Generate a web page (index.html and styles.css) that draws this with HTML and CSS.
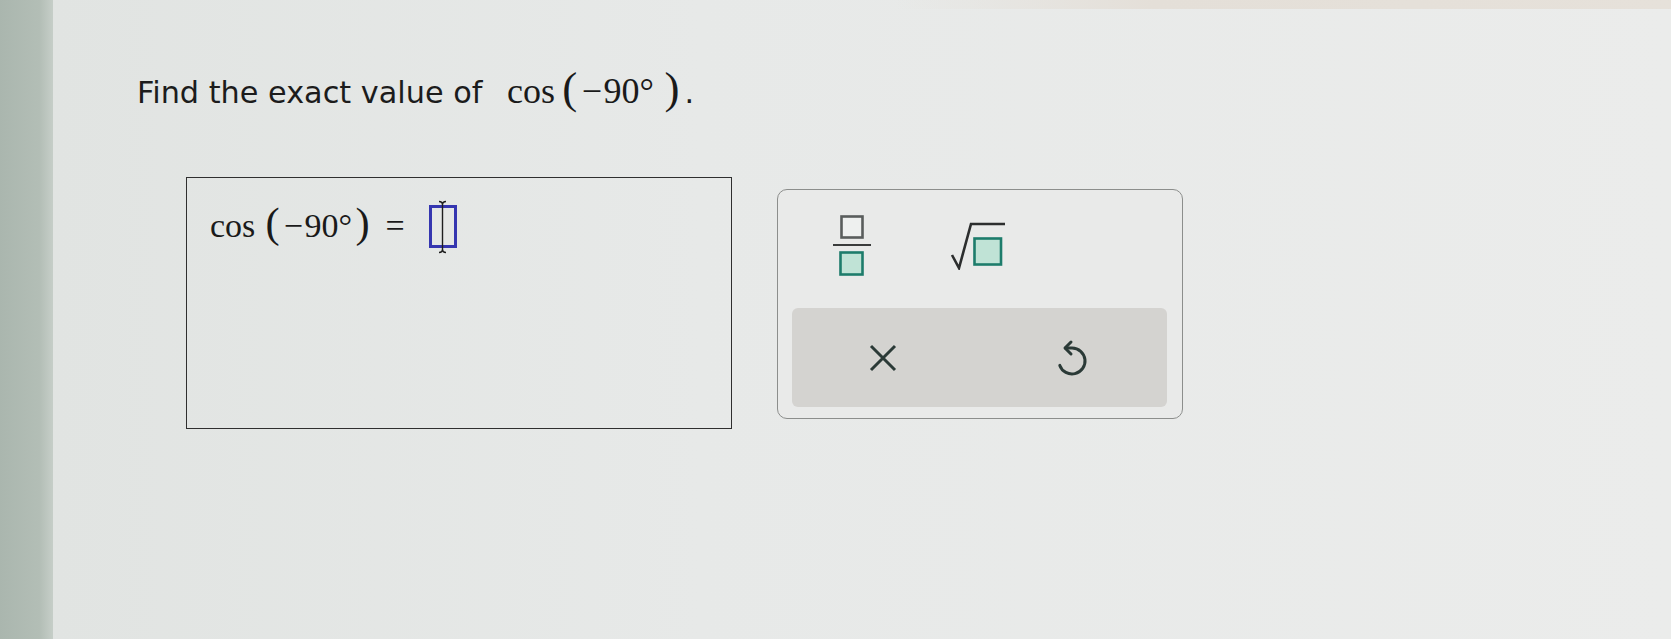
FILE: index.html
```html
<!DOCTYPE html>
<html lang="en">
<head>
<meta charset="utf-8">
<title>Find the exact value</title>
<link rel="stylesheet" href="styles.css">
</head>
<body>
<div class="page">
  <div class="bezel"></div>
  <main class="screen">
    <p class="prompt">Find the exact value of <span class="math m-lg"><span class="fn">cos</span><span class="paren open">(</span><span class="minus">−</span>90<span class="deg">°</span><span class="paren">)</span></span><span class="dot">.</span></p>
    <div class="work">
      <div class="answer">
        <div class="eq math"><span class="fn">cos</span><span class="paren open">(</span><span class="minus">−</span>90<span class="deg">°</span><span class="paren">)</span><span class="eqsign">=</span><span class="slot"><svg class="cursor" viewBox="0 0 9 54" width="9" height="54"><path d="M1 1.5 Q4.5 1.5 4.5 5 Q4.5 1.5 8 1.5 M4.5 5 V49 M1 52.5 Q4.5 52.5 4.5 49 Q4.5 52.5 8 52.5" fill="none" stroke="#1e1e1e" stroke-width="1.4"/></svg></span></div>
      </div>
      <div class="keypad">
        <div class="keys-top">
          <button class="key" aria-label="fraction">
            <svg width="40" height="62" viewBox="0 0 40 62">
              <rect x="9.5" y="1.5" width="21" height="21" fill="#eef0ef" stroke="#595d5c" stroke-width="2.6"/>
              <line x1="1" y1="30" x2="39" y2="30" stroke="#3a3c3c" stroke-width="2.2"/>
              <rect x="8.5" y="37.5" width="22" height="22" fill="#c0e3d6" stroke="#1d7c6b" stroke-width="2.6"/>
            </svg>
          </button>
          <button class="key" aria-label="square root">
            <svg width="56" height="48" viewBox="0 0 56 48">
              <path d="M2 33 L9 46 L21 2 L55 2" fill="none" stroke="#2c2e2e" stroke-width="2.6" stroke-linejoin="miter"/>
              <rect x="24.5" y="16.5" width="26.5" height="26" fill="#c0e3d6" stroke="#1d7c6b" stroke-width="2.6"/>
            </svg>
          </button>
        </div>
        <div class="keys-bar">
          <button class="key key-clear" aria-label="clear">
            <svg width="28" height="28" viewBox="0 0 28 28">
              <path d="M2 2 L26 26 M26 2 L2 26" stroke="#2b3a37" stroke-width="3" fill="none"/>
            </svg>
          </button>
          <button class="key key-undo" aria-label="undo">
            <svg width="34" height="42" viewBox="0 0 34 42">
              <path d="M10.5 11 H17 A13 13 0 1 1 4.8 28.4" fill="none" stroke="#2b3a37" stroke-width="3" stroke-linecap="round"/>
              <path d="M16 5 L10 11 L16 17" fill="none" stroke="#2b3a37" stroke-width="3" stroke-linecap="round" stroke-linejoin="round"/>
            </svg>
          </button>
        </div>
      </div>
    </div>
  </main>
</div>
</body>
</html>
```

FILE: styles.css
```css
html, body {
  margin: 0;
  padding: 0;
}

body {
  width: 1671px;
  height: 639px;
  overflow: hidden;
  background: #e6e8e7;
}

.page {
  display: flex;
  height: 639px;
}

.bezel {
  flex: none;
  width: 53px;
  background: linear-gradient(to right, #aab6ae 0%, #b3beb6 75%, #c6cec8 100%);
}

.screen {
  flex: 1;
  background:
    linear-gradient(to right, rgba(227, 221, 212, 0) 52%, #e4dfd8 68%, #e6e1da 100%) top left / 100% 9px no-repeat,
    linear-gradient(to right, #e1e4e2 0%, #e7e9e8 40%, #ebeceb 100%);
}

.prompt {
  margin: 69px 0 0 84px;
  font-family: "DejaVu Sans", "Liberation Sans", sans-serif;
  font-size: 30.3px;
  line-height: 48px;
  color: #1c1c1c;
  white-space: nowrap;
}

.math {
  font-family: "Liberation Serif", "Times New Roman", serif;
  color: #1a1a1a;
}

.m-lg {
  font-size: 36px;
  line-height: 1;
  margin-left: 15px;
}

.fn {
  margin-right: 0.2em;
}

.paren {
  font-size: 1.25em;
  line-height: 0;
}

.paren.open {
  margin-right: 0.05em;
}

.minus {
  margin: 0 0.04em 0 0.06em;
}

.deg {
  margin-right: 0.3em;
}

.dot {
  margin-left: 5px;
}

.work {
  display: flex;
  align-items: flex-start;
  margin: 60px 0 0 133px;
}

.answer {
  flex: none;
  width: 546px;
  height: 252px;
  box-sizing: border-box;
  border: 1.5px solid #2f2f2f;
  padding: 26px 0 0 23px;
}

.eq {
  font-size: 34px;
  line-height: 44px;
  white-space: nowrap;
}

.eq .fn {
  margin-right: 0.3em;
}

.eq .deg {
  margin-right: 0.1em;
}

.eqsign {
  margin: 0 14px 0 16px;
}

.slot {
  display: inline-block;
  width: 28px;
  height: 43px;
  box-sizing: border-box;
  border: 3px solid #3536b0;
  vertical-align: -11px;
  margin-left: 10px;
}

.cursor {
  display: block;
  margin: -8px auto 0;
}

.keypad {
  flex: none;
  width: 406px;
  height: 230px;
  box-sizing: border-box;
  margin: 12px 0 0 45px;
  border: 1.5px solid #8c8e8c;
  border-radius: 10px;
  padding: 0 15px 0 14px;
  background: #e9eae9;
}

.key {
  display: flex;
  align-items: center;
  justify-content: center;
  border: 0;
  padding: 0;
  margin: 0;
  background: transparent;
  font: inherit;
}

.keys-top {
  display: flex;
  align-items: center;
  height: 112px;
  margin-left: -3px;
}

.keys-top .key {
  width: 126px;
  height: 80px;
}

.keys-bar {
  display: flex;
  height: 99px;
  margin-top: 6px;
  border-radius: 6px;
  background: #d4d3d0;
}

.keys-bar .key {
  flex: 1;
  height: 99px;
}

.key-clear {
  padding-right: 8px;
}

.key-undo {
  padding-right: 4px;
}
```
